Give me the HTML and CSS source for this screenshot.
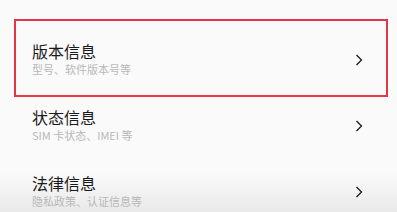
FILE: index.html
```html
<!DOCTYPE html>
<html lang="zh-CN">
<head>
  <meta charset="UTF-8">
  <meta name="viewport" content="width=device-width, initial-scale=1.0">
  <title>关于手机</title>
  <link rel="stylesheet" href="styles.css">
</head>
<body>
  <ul class="settings-list">
    <li class="settings-item highlighted">
      <div class="item-text">
        <div class="item-title">版本信息</div>
        <div class="item-desc">型号、软件版本号等</div>
      </div>
      <svg class="chevron" width="8" height="12" viewBox="0 0 8 12">
        <path d="M1.5 1 L6.5 6 L1.5 11" fill="none" stroke="#1a1a1a" stroke-width="1.3"/>
      </svg>
    </li>
    <li class="settings-item">
      <div class="item-text">
        <div class="item-title">状态信息</div>
        <div class="item-desc">SIM 卡状态、IMEI 等</div>
      </div>
      <svg class="chevron" width="8" height="12" viewBox="0 0 8 12">
        <path d="M1.5 1 L6.5 6 L1.5 11" fill="none" stroke="#1a1a1a" stroke-width="1.3"/>
      </svg>
    </li>
    <li class="settings-item">
      <div class="item-text">
        <div class="item-title">法律信息</div>
        <div class="item-desc">隐私政策、认证信息等</div>
      </div>
      <svg class="chevron" width="8" height="12" viewBox="0 0 8 12">
        <path d="M1.5 1 L6.5 6 L1.5 11" fill="none" stroke="#1a1a1a" stroke-width="1.3"/>
      </svg>
    </li>
  </ul>
</body>
</html>
```

FILE: styles.css
```css
html, body {
  height: 100%;
}
body {
  margin: 0;
  font-family: "Noto Sans CJK SC", "Noto Sans", sans-serif;
  background: linear-gradient(to bottom, #fafafa 0, #fafafa 172px, #e9e9e9 212px);
  overflow: hidden;
}
.settings-list {
  list-style: none;
  margin: 0;
  padding: 27px 0 0 0;
  height: 212px;
  box-sizing: border-box;
  overflow: hidden;
}
.settings-item {
  position: relative;
  height: 66px;
  display: flex;
  align-items: center;
  justify-content: space-between;
  padding: 0 34px 0 32px;
  box-sizing: border-box;
}
.item-text {
  margin-bottom: 4px;
}
.item-title {
  font-size: 16px;
  line-height: 20px;
  color: #1a1a1a;
}
.item-desc {
  font-size: 11px;
  line-height: 14px;
  margin-top: 1px;
  color: #b8b8b8;
}
.chevron {
  display: block;
}
.highlighted::after {
  content: "";
  position: absolute;
  top: -8px;
  left: 14px;
  right: 9px;
  bottom: -4px;
  border: 2px solid #e53646;
}
```
